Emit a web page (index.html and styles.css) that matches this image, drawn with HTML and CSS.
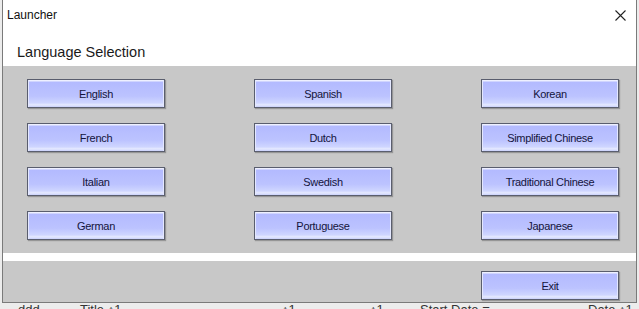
FILE: index.html
```html
<!DOCTYPE html>
<html>
<head>
    <title>Launcher</title>
    <link rel="stylesheet" href="styles.css">
</head>
<body>
    <div class="window">
        <div class="title-bar">
            <span class="title">Launcher</span>
            <svg class="close" width="11" height="11" viewBox="0 0 11 11">
                <path d="M0.5 0.5 L10.5 10.5 M10.5 0.5 L0.5 10.5" stroke="#222" stroke-width="1.1" fill="none"/>
            </svg>
        </div>
        <div class="heading">Language Selection</div>

        <div class="lang-grid">
            <button class="lang-btn">English</button>
            <button class="lang-btn">Spanish</button>
            <button class="lang-btn">Korean</button>
            <button class="lang-btn">French</button>
            <button class="lang-btn">Dutch</button>
            <button class="lang-btn">Simplified Chinese</button>
            <button class="lang-btn">Italian</button>
            <button class="lang-btn">Swedish</button>
            <button class="lang-btn">Traditional Chinese</button>
            <button class="lang-btn">German</button>
            <button class="lang-btn">Portuguese</button>
            <button class="lang-btn">Japanese</button>
        </div>

        <div class="divider"></div>

        <div class="footer">
            <button class="lang-btn">Exit</button>
        </div>
    </div>

    <div class="behind">
        <span class="col-a">ddd</span>
        <span class="col-b">Title ↑1</span>
        <span class="col-c">↑1</span>
        <span class="col-d">↑1</span>
        <span class="col-e">Start Date ≡</span>
        <span class="col-f">Date ↑1</span>
    </div>
</body>
</html>
```

FILE: styles.css
```css
body {
    margin: 0;
    background: #ececec;
    font-family: 'Liberation Sans', Arial, sans-serif;
    width: 639px;
    height: 309px;
    overflow: hidden;
}

.window {
    margin-left: 2px;
    width: 633px;
    border: 1px solid #7a7a7a;
    border-top: none;
    background: #c8c8c8;
}

.title-bar {
    height: 33px;
    background: #fff;
    display: flex;
    justify-content: space-between;
    align-items: flex-start;
}

.title {
    font-size: 12px;
    color: #111;
    padding: 8px 0 0 4px;
}

.close {
    margin: 10px 10px 0 0;
}

.heading {
    height: 33px;
    background: #fff;
    font-size: 14.5px;
    color: #1a1a1a;
    padding-left: 14px;
    line-height: 20px;
    box-sizing: border-box;
    padding-top: 9px;
}

.lang-grid {
    display: grid;
    grid-template-columns: repeat(3, 138px);
    grid-auto-rows: 29px;
    column-gap: 89px;
    row-gap: 15px;
    padding: 13px 0 13px 24px;
}

.lang-btn {
    width: 138px;
    height: 29px;
    margin: 0;
    padding: 0;
    border: 1px solid #5a5e6e;
    background: linear-gradient(#eef0ff 0, #eef0ff 1px, #b3baff 2px, #bcc3ff 60%, #cfd6ff 85%, #e6eaff 92%, #c9d0fb 100%);
    box-shadow: inset 1px 0 0 #e4e8ff, inset -1px 0 0 #e4e8ff, 1px 1px 1px rgba(0, 0, 0, 0.25);
    font-family: 'Liberation Sans', Arial, sans-serif;
    font-size: 11px;
    letter-spacing: -0.3px;
    color: #14143c;
}

.divider {
    height: 8px;
    background: #fff;
}

.footer {
    display: flex;
    justify-content: flex-end;
    padding: 10px 17px 2px 0;
}

.behind {
    position: relative;
    height: 8px;
    overflow: hidden;
    font-size: 13px;
    color: #333;
}

.behind span {
    position: absolute;
    top: -1px;
}

.col-a { left: 18px; }
.col-b { left: 80px; }
.col-c { left: 282px; }
.col-d { left: 370px; }
.col-e { left: 420px; }
.col-f { left: 588px; }
```
